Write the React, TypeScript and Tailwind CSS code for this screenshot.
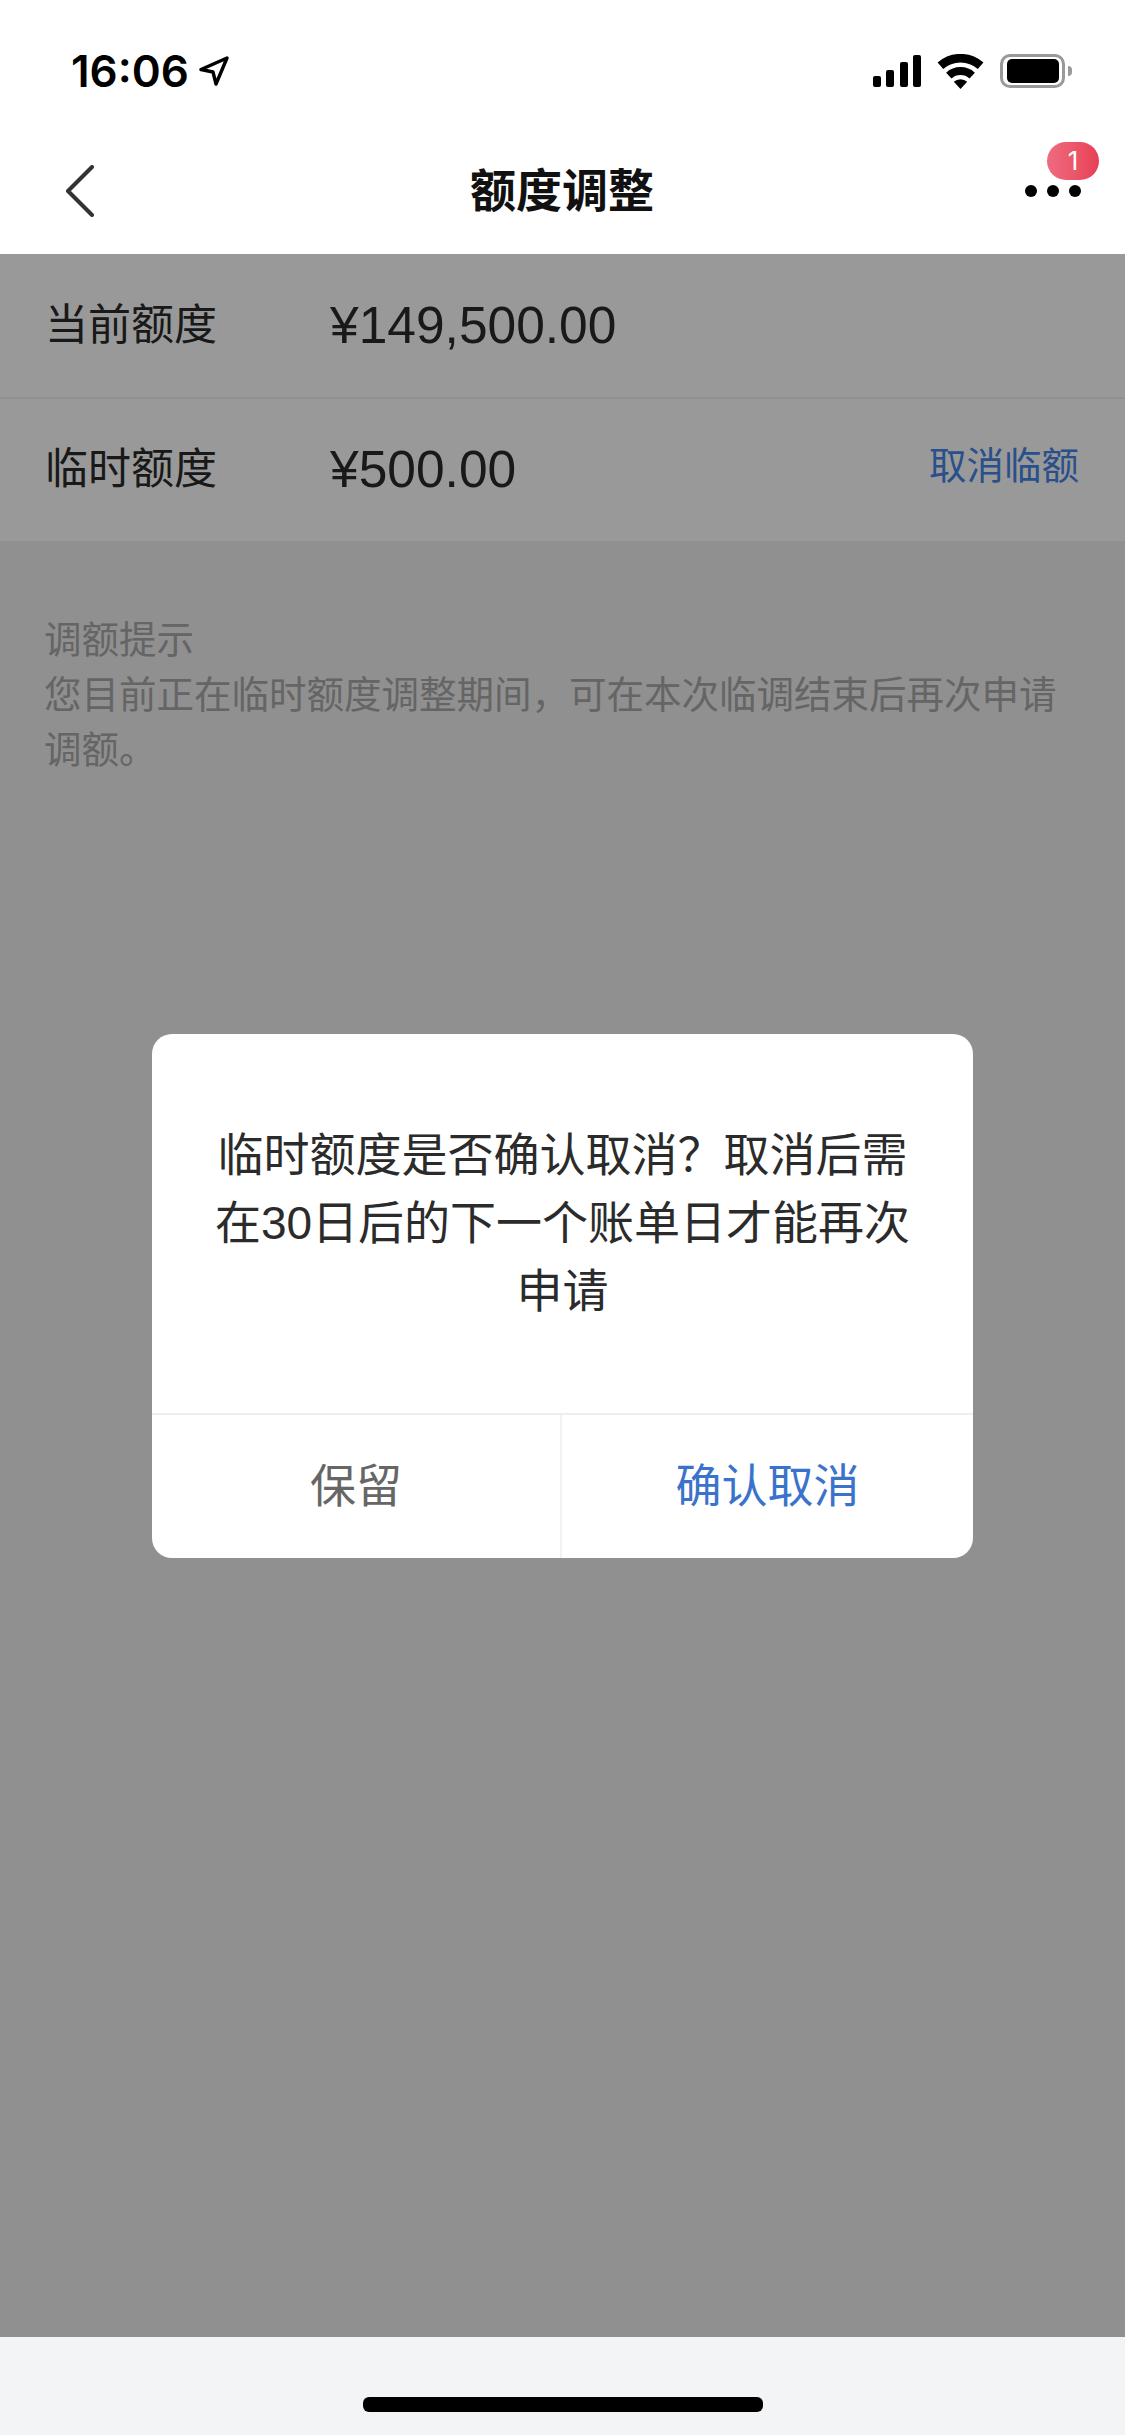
const sans = "font-['Liberation_Sans','Noto_Sans_CJK_SC',sans-serif]";

function StatusBar() {
  return (
    <div className="flex h-[142px] items-center justify-between pl-[71px] pr-[53px]">
      <div className="flex items-center gap-[10px]">
        <span className="font-['Inter',sans-serif] text-[44px] leading-none font-semibold text-black">16:06</span>
        {/* location arrow */}
        <svg width="30" height="30" viewBox="0 0 30 30" fill="none">
          <path d="M28 2 L2 13.5 L14 16 L17 28 Z" stroke="#000" strokeWidth="3.4" strokeLinejoin="round" />
        </svg>
      </div>
      <div className="flex items-center">
        {/* signal */}
        <div className="flex h-[32px] items-end gap-[5.5px]">
          <div className="h-[11px] w-[8px] rounded-[2px] bg-black" />
          <div className="h-[17px] w-[8px] rounded-[2px] bg-black" />
          <div className="h-[25px] w-[8px] rounded-[2px] bg-black" />
          <div className="h-[32px] w-[8px] rounded-[2px] bg-black" />
        </div>
        {/* wifi */}
        <svg className="ml-[16px]" width="47" height="35" viewBox="0 0 47 35" fill="none">
          <path d="M3.4 11.7 A30.5 30.5 0 0 1 43.6 11.7" stroke="#000" strokeWidth="8.5" />
          <path d="M11.8 21.6 A17.5 17.5 0 0 1 35.2 21.6" stroke="#000" strokeWidth="8" />
          <path d="M23.5 35 L16.8 27.8 A10 10 0 0 1 30.2 27.8 Z" fill="#000" />
        </svg>
        {/* battery */}
        <div className="ml-[16px] flex items-center">
          <div className="flex h-[34px] w-[65px] items-center justify-center rounded-[10px] border-[3px] border-[#999999]">
            <div className="h-[24px] w-[52px] rounded-[5px] bg-black" />
          </div>
          <div className="ml-[3px] h-[10px] w-[4px] rounded-r-full bg-[#999999]" />
        </div>
      </div>
    </div>
  );
}

function NavBar() {
  return (
    <div className="flex h-[112px] items-center justify-between pb-[14px] pl-[65px] pr-[44px]">
      <div className="w-[34px]">
        <svg width="30" height="52" viewBox="0 0 30 52" fill="none">
          <path d="M27 2 L3 26 L27 50" stroke="#333" strokeWidth="4" strokeLinecap="round" strokeLinejoin="round" />
        </svg>
      </div>
      <h1 className="text-[46px] leading-none font-bold text-[#111111]">额度调整</h1>
      <div className="relative flex w-[56px] justify-between">
        <div className="size-[12px] rounded-full bg-black" />
        <div className="size-[12px] rounded-full bg-black" />
        <div className="size-[12px] rounded-full bg-black" />
        <div className="absolute -right-[18px] -top-[43px] flex h-[38px] w-[52px] items-center justify-center rounded-full bg-gradient-to-r from-[#ee6b80] to-[#e83f55] font-['Inter',sans-serif] text-[26px] leading-none text-white">
          1
        </div>
      </div>
    </div>
  );
}

function LimitRow({ label, amount, action }: { label: string; amount: string; action?: string }) {
  return (
    <div className="flex h-[142.5px] items-center justify-between pl-[45px] pr-[46px]">
      <div className="flex items-center">
        <span className="w-[285px] text-[43px] leading-none text-[#2b2b2b]">{label}</span>
        <span className="text-[51.5px] leading-none text-[#2b2b2b]">{amount}</span>
      </div>
      {action && <span className="mb-[6px] text-[37.5px] leading-none text-[#4585e8]">{action}</span>}
    </div>
  );
}

export default function App() {
  return (
    <div lang="zh-CN" className={`relative flex h-[2435px] w-[1125px] flex-col overflow-hidden bg-[#f3f4f6] ${sans}`}>
      <div className="bg-white">
        <StatusBar />
        <NavBar />
      </div>

      <div className="bg-white">
        <LimitRow label="当前额度" amount="¥149,500.00" />
        <div className="h-[2px] bg-[#eeeeee]" />
        <LimitRow label="临时额度" amount="¥500.00" action="取消临额" />
      </div>

      <div className="flex-1 bg-[#f0f0f0] px-[44px] pt-[72px] text-[37.5px] leading-[55px] text-[#a8a8a8]">
        <p>调额提示</p>
        <p>{"您目前正在临时额度调整期间\uFF0C可在本次临调结束后再次申请调额\u3002"}</p>
      </div>

      <div className="flex h-[98px] justify-center bg-[#f3f4f6] pt-[60px]">
        <div className="h-[15px] w-[400px] rounded-[6px] bg-black" />
      </div>

      {/* dim layer + dialog */}
      <div className="absolute inset-x-0 bottom-[98px] top-[254px] flex items-center justify-center bg-black/40">
        <div className="w-[821px] overflow-hidden rounded-[20px] bg-white">
          <div className="flex h-[379px] items-center justify-center px-[50px] text-center text-[46px] leading-[68px] text-[#2b2b2b]">
            {"临时额度是否确认取消\uFF1F取消后需在30日后的下一个账单日才能再次申请"}
          </div>
          <div className="flex h-[145px] border-t-2 border-[#eeeeee] text-[46px]">
            <button className="w-[410px] border-r-2 border-[#f2f2f2] text-[#666666]">保留</button>
            <button className="flex-1 text-[#3b73cc]">确认取消</button>
          </div>
        </div>
      </div>
    </div>
  );
}
